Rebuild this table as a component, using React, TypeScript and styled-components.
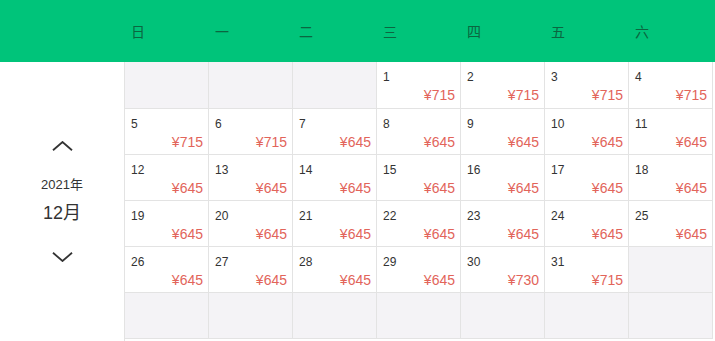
import styled, { createGlobalStyle } from 'styled-components';

const GlobalStyle = createGlobalStyle`
  body {
    margin: 0;
    background: #fff;
    font-family: "Microsoft YaHei", "Liberation Sans", "Noto Sans CJK SC", sans-serif;
  }
`

const Page = styled.div`
  width: 715px;
  height: 341px;
  overflow: hidden;
`

const Header = styled.div`
  height: 62px;
  background: #00c47a;
  display: grid;
  grid-template-columns: 124px repeat(7, 84px);
  align-items: center;
`

const WeekDay = styled.div`
  padding-left: 7px;
  font-size: 14px;
  color: #0b6640;
  font-family: "Noto Sans CJK SC", sans-serif;
`

const Body = styled.div`
  display: flex;
`

const Side = styled.div`
  width: 124px;
  height: 279px;
  display: flex;
  flex-direction: column;
  align-items: center;
  justify-content: center;
  color: #333;
`

const Arrow = styled.button<{ $up?: boolean }>`
  border: none;
  background: none;
  padding: 0;
  display: flex;
  margin: ${p => p.$up ? '0 0 26px' : '28px 0 0'};
`

const Year = styled.div`
  font-size: 13px;
  font-family: "Liberation Sans", "Noto Sans CJK SC", sans-serif;
  line-height: 16px;
`

const Month = styled.div`
  font-size: 18px;
  font-family: "Liberation Sans", "Noto Sans CJK SC", sans-serif;
  line-height: 22px;
  margin-top: 9px;
`

const Grid = styled.div`
  display: grid;
  grid-template-columns: repeat(7, 84px);
  grid-template-rows: 47px repeat(5, 46px);
  border-left: 1px solid #e3e3e3;
`

const Cell = styled.div<{ $empty?: boolean }>`
  box-sizing: border-box;
  border-right: 1px solid #e3e3e3;
  border-bottom: 1px solid #e3e3e3;
  background: ${p => p.$empty ? '#f4f3f6' : '#fff'};
  padding: 8px 5px 0 6px;
  display: flex;
  flex-direction: column;
  font-family: "Liberation Sans", sans-serif;
`

const DateNum = styled.div`
  font-size: 12px;
  color: #333;
  line-height: 14px;
`

const Price = styled.div`
  font-size: 14px;
  color: #e2645a;
  text-align: right;
  line-height: 16px;
  margin-top: 3px;
`

const days = ['日', '一', '二', '三', '四', '五', '六']

const prices: Record<number, number> = {
  1: 715, 2: 715, 3: 715, 4: 715, 5: 715, 6: 715, 30: 730, 31: 715,
}

function Chevron({ up }: { up?: boolean }) {
  return (
    <svg width="21" height="10" viewBox="0 0 21 10" fill="none" stroke="#333" strokeWidth="1.8">
      {up ? <path d="M1 9.2L10.5 1L20 9.2" /> : <path d="M1 0.8L10.5 9L20 0.8" />}
    </svg>
  )
}

export default function App() {
  const cells = []
  for (let i = 0; i < 42; i++) {
    const d = i - 2
    if (d >= 1 && d <= 31) {
      cells.push(
        <Cell key={i}>
          <DateNum>{d}</DateNum>
          <Price>¥{prices[d] ?? 645}</Price>
        </Cell>
      )
    } else {
      cells.push(<Cell key={i} $empty />)
    }
  }
  return (
    <Page>
      <GlobalStyle />
      <Header>
        <div />
        {days.map(d => <WeekDay key={d}>{d}</WeekDay>)}
      </Header>
      <Body>
        <Side>
          <Arrow $up><Chevron up /></Arrow>
          <Year>2021年</Year>
          <Month>12月</Month>
          <Arrow><Chevron /></Arrow>
        </Side>
        <Grid>{cells}</Grid>
      </Body>
    </Page>
  )
}
